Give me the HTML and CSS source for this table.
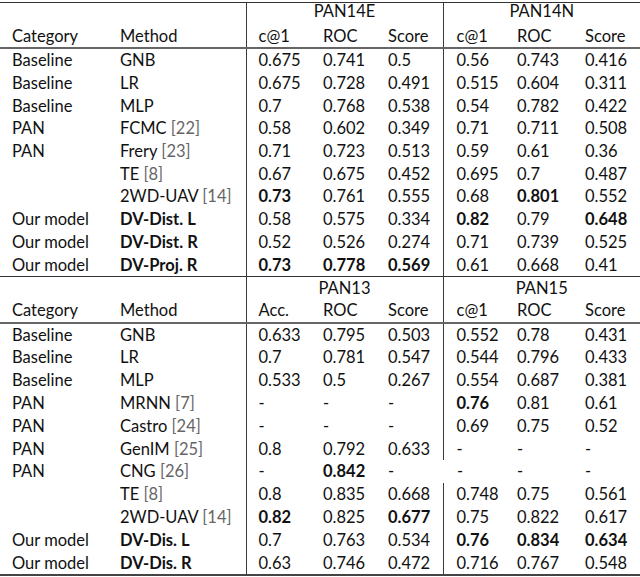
FILE: index.html
```html
<!DOCTYPE html>
<html>
<head>
<meta charset="utf-8">
<link rel="stylesheet" href="styles.css">
</head>
<body>
<table class="results">
  <colgroup>
    <col class="c-cat"><col class="c-meth"><col class="c-n1"><col class="c-n2"><col class="c-n3"><col class="c-n4"><col class="c-n5"><col class="c-n6">
  </colgroup>
  <tbody class="part1">
    <tr class="group top">
      <td></td><td></td>
      <td class="div1 ds" colspan="3">PAN14E</td>
      <td class="div2 ds" colspan="3">PAN14N</td>
    </tr>
    <tr class="head">
      <td>Category</td><td>Method</td>
      <td class="div1">c@1</td><td>ROC</td><td>Score</td>
      <td class="div2">c@1</td><td>ROC</td><td>Score</td>
    </tr>
    <tr><td>Baseline</td><td>GNB</td><td class="div1">0.675</td><td>0.741</td><td>0.5</td><td class="div2">0.56</td><td>0.743</td><td>0.416</td></tr>
    <tr><td>Baseline</td><td>LR</td><td class="div1">0.675</td><td>0.728</td><td>0.491</td><td class="div2">0.515</td><td>0.604</td><td>0.311</td></tr>
    <tr><td>Baseline</td><td>MLP</td><td class="div1">0.7</td><td>0.768</td><td>0.538</td><td class="div2">0.54</td><td>0.782</td><td>0.422</td></tr>
    <tr><td>PAN</td><td>FCMC <span class="cite">[22]</span></td><td class="div1">0.58</td><td>0.602</td><td>0.349</td><td class="div2">0.71</td><td>0.711</td><td>0.508</td></tr>
    <tr><td>PAN</td><td>Frery <span class="cite">[23]</span></td><td class="div1">0.71</td><td>0.723</td><td>0.513</td><td class="div2">0.59</td><td>0.61</td><td>0.36</td></tr>
    <tr><td></td><td>TE <span class="cite">[8]</span></td><td class="div1">0.67</td><td>0.675</td><td>0.452</td><td class="div2">0.695</td><td>0.7</td><td>0.487</td></tr>
    <tr><td></td><td>2WD-UAV <span class="cite">[14]</span></td><td class="div1 b">0.73</td><td>0.761</td><td>0.555</td><td class="div2">0.68</td><td class="b">0.801</td><td>0.552</td></tr>
    <tr><td>Our model</td><td class="b">DV-Dist. L</td><td class="div1">0.58</td><td>0.575</td><td>0.334</td><td class="div2 b">0.82</td><td>0.79</td><td class="b">0.648</td></tr>
    <tr><td>Our model</td><td class="b">DV-Dist. R</td><td class="div1">0.52</td><td>0.526</td><td>0.274</td><td class="div2">0.71</td><td>0.739</td><td>0.525</td></tr>
    <tr class="last"><td>Our model</td><td class="b">DV-Proj. R</td><td class="div1 b">0.73</td><td class="b">0.778</td><td class="b">0.569</td><td class="div2">0.61</td><td>0.668</td><td>0.41</td></tr>
  </tbody>
  <tbody class="part2">
    <tr class="group">
      <td></td><td></td>
      <td class="div1 ds" colspan="3">PAN13</td>
      <td class="div2 ds" colspan="3">PAN15</td>
    </tr>
    <tr class="head">
      <td>Category</td><td>Method</td>
      <td class="div1">Acc.</td><td>ROC</td><td>Score</td>
      <td class="div2">c@1</td><td>ROC</td><td>Score</td>
    </tr>
    <tr><td>Baseline</td><td>GNB</td><td class="div1">0.633</td><td>0.795</td><td>0.503</td><td class="div2">0.552</td><td>0.78</td><td>0.431</td></tr>
    <tr><td>Baseline</td><td>LR</td><td class="div1">0.7</td><td>0.781</td><td>0.547</td><td class="div2">0.544</td><td>0.796</td><td>0.433</td></tr>
    <tr><td>Baseline</td><td>MLP</td><td class="div1">0.533</td><td>0.5</td><td>0.267</td><td class="div2">0.554</td><td>0.687</td><td>0.381</td></tr>
    <tr><td>PAN</td><td>MRNN <span class="cite">[7]</span></td><td class="div1">-</td><td>-</td><td>-</td><td class="div2 b">0.76</td><td>0.81</td><td>0.61</td></tr>
    <tr><td>PAN</td><td>Castro <span class="cite">[24]</span></td><td class="div1">-</td><td>-</td><td>-</td><td class="div2">0.69</td><td>0.75</td><td>0.52</td></tr>
    <tr><td>PAN</td><td>GenIM <span class="cite">[25]</span></td><td class="div1">0.8</td><td>0.792</td><td>0.633</td><td class="div2">-</td><td>-</td><td>-</td></tr>
    <tr><td>PAN</td><td>CNG <span class="cite">[26]</span></td><td class="div1">-</td><td class="b">0.842</td><td>-</td><td class="nodiv">-</td><td>-</td><td>-</td></tr>
    <tr><td></td><td>TE <span class="cite">[8]</span></td><td class="div1">0.8</td><td>0.835</td><td>0.668</td><td class="div2">0.748</td><td>0.75</td><td>0.561</td></tr>
    <tr><td></td><td>2WD-UAV <span class="cite">[14]</span></td><td class="div1 b">0.82</td><td>0.825</td><td class="b">0.677</td><td class="div2">0.75</td><td>0.822</td><td>0.617</td></tr>
    <tr><td>Our model</td><td class="b">DV-Dis. L</td><td class="div1">0.7</td><td>0.763</td><td>0.534</td><td class="div2 b">0.76</td><td class="b">0.834</td><td class="b">0.634</td></tr>
    <tr class="end"><td>Our model</td><td class="b">DV-Dis. R</td><td class="div1">0.63</td><td>0.746</td><td>0.472</td><td class="div2">0.716</td><td>0.767</td><td>0.548</td></tr>
  </tbody>
</table>
</body>
</html>
```
FILE: styles.css
```css
html, body {
  margin: 0;
  padding: 0;
  background: #ffffff;
}
body {
  font-family: "Lato", "Open Sans", sans-serif;
  font-size: 16.5px;
  color: #111111;
}
.results {
  width: 640px;
  border-collapse: collapse;
  table-layout: fixed;
  margin-top: 2px;
}
.c-cat { width: 108px; }
.c-meth { width: 138px; }
.c-n1 { width: 65px; }
.c-n2 { width: 65px; }
.c-n3 { width: 67px; }
.c-n4 { width: 62px; }
.c-n5 { width: 68px; }
.c-n6 { width: 67px; }
.results td {
  height: 22.7px;
  padding: 1px 0 0 12px;
  line-height: 21.7px;
  white-space: nowrap;
  vertical-align: middle;
  box-sizing: border-box;
}
.part2 td {
  height: 22.8px;
  line-height: 21.8px;
}
.results tr.group td { height: 22px; line-height: 20px; padding-top: 0; }
.results tr.top td { line-height: 16px; vertical-align: top; }
.results td.div1 { border-left: 1px solid #3a3a3a; }
.results td.div2 { border-left: 1px solid #3a3a3a; padding-left: 13px; }
.results td.nodiv { padding-left: 14px; }
.results td.ds { text-align: center; padding-left: 0; }
.results tr.top td { border-top: 1px solid #333333; }
.results tr.head td { border-bottom: 2px solid #666666; }
.results tr.last td { border-bottom: 1px solid #333333; }
.results tr.end td { border-bottom: 2px solid #444444; }
.b { font-weight: 700; }
.cite { color: #666666; }
```
